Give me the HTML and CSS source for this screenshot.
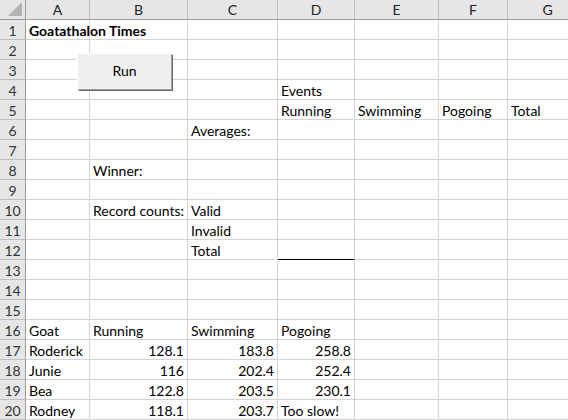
FILE: index.html
```html
<!DOCTYPE html>
<html>
<head>
	<meta charset="utf-8" />
	<title>Goatathalon Times</title>
	<link rel="stylesheet" href="styles.css">
</head>
<body>
	<div class="sheet">
		<div class="grid">
			<div class="corner"><span class="tri"></span></div>
			<div class="colhead">A</div><div class="colhead">B</div><div class="colhead">C</div><div class="colhead">D</div><div class="colhead">E</div><div class="colhead">F</div><div class="colhead">G</div>

			<div class="rowhead">1</div><div class="cell bold">Goatathalon Times</div><div class="cell"></div><div class="cell"></div><div class="cell"></div><div class="cell"></div><div class="cell"></div><div class="cell"></div>
			<div class="rowhead">2</div><div class="cell"></div><div class="cell"></div><div class="cell"></div><div class="cell"></div><div class="cell"></div><div class="cell"></div><div class="cell"></div>
			<div class="rowhead">3</div><div class="cell"></div><div class="cell"></div><div class="cell"></div><div class="cell"></div><div class="cell"></div><div class="cell"></div><div class="cell"></div>
			<div class="rowhead">4</div><div class="cell"></div><div class="cell"></div><div class="cell"></div><div class="cell">Events</div><div class="cell"></div><div class="cell"></div><div class="cell"></div>
			<div class="rowhead">5</div><div class="cell"></div><div class="cell"></div><div class="cell"></div><div class="cell">Running</div><div class="cell">Swimming</div><div class="cell">Pogoing</div><div class="cell">Total</div>
			<div class="rowhead">6</div><div class="cell"></div><div class="cell"></div><div class="cell">Averages:</div><div class="cell"></div><div class="cell"></div><div class="cell"></div><div class="cell"></div>
			<div class="rowhead">7</div><div class="cell"></div><div class="cell"></div><div class="cell"></div><div class="cell"></div><div class="cell"></div><div class="cell"></div><div class="cell"></div>
			<div class="rowhead">8</div><div class="cell"></div><div class="cell">Winner:</div><div class="cell"></div><div class="cell"></div><div class="cell"></div><div class="cell"></div><div class="cell"></div>
			<div class="rowhead">9</div><div class="cell"></div><div class="cell"></div><div class="cell"></div><div class="cell"></div><div class="cell"></div><div class="cell"></div><div class="cell"></div>
			<div class="rowhead">10</div><div class="cell"></div><div class="cell">Record counts:</div><div class="cell">Valid</div><div class="cell"></div><div class="cell"></div><div class="cell"></div><div class="cell"></div>
			<div class="rowhead">11</div><div class="cell"></div><div class="cell"></div><div class="cell">Invalid</div><div class="cell"></div><div class="cell"></div><div class="cell"></div><div class="cell"></div>
			<div class="rowhead">12</div><div class="cell"></div><div class="cell"></div><div class="cell">Total</div><div class="cell underline"></div><div class="cell"></div><div class="cell"></div><div class="cell"></div>
			<div class="rowhead">13</div><div class="cell"></div><div class="cell"></div><div class="cell"></div><div class="cell"></div><div class="cell"></div><div class="cell"></div><div class="cell"></div>
			<div class="rowhead">14</div><div class="cell"></div><div class="cell"></div><div class="cell"></div><div class="cell"></div><div class="cell"></div><div class="cell"></div><div class="cell"></div>
			<div class="rowhead">15</div><div class="cell"></div><div class="cell"></div><div class="cell"></div><div class="cell"></div><div class="cell"></div><div class="cell"></div><div class="cell"></div>
			<div class="rowhead">16</div><div class="cell">Goat</div><div class="cell">Running</div><div class="cell">Swimming</div><div class="cell">Pogoing</div><div class="cell"></div><div class="cell"></div><div class="cell"></div>
			<div class="rowhead">17</div><div class="cell">Roderick</div><div class="cell num">128.1</div><div class="cell num">183.8</div><div class="cell num">258.8</div><div class="cell"></div><div class="cell"></div><div class="cell"></div>
			<div class="rowhead">18</div><div class="cell">Junie</div><div class="cell num">116</div><div class="cell num">202.4</div><div class="cell num">252.4</div><div class="cell"></div><div class="cell"></div><div class="cell"></div>
			<div class="rowhead">19</div><div class="cell">Bea</div><div class="cell num">122.8</div><div class="cell num">203.5</div><div class="cell num">230.1</div><div class="cell"></div><div class="cell"></div><div class="cell"></div>
			<div class="rowhead">20</div><div class="cell">Rodney</div><div class="cell num">118.1</div><div class="cell num">203.7</div><div class="cell">Too slow!</div><div class="cell"></div><div class="cell"></div><div class="cell"></div>
		</div>
		<button class="runBtn" type="button">Run</button>
	</div>
</body>
</html>
```
FILE: styles.css
```css
html, body{
	margin: 0;
	padding: 0;
	background: #fff;
	overflow: hidden;
}
.sheet{
	position: relative;
	width: 568px;
	height: 420px;
	overflow: hidden;
	font-family: Lato, "Open Sans", sans-serif;
	font-size: 14px;
	color: #000;
}
.grid{
	display: grid;
	grid-template-columns: 26px 64px 98px 90px 77px 84px 69px 80px;
	grid-auto-rows: 20px;
}
.grid > div{
	box-sizing: border-box;
	white-space: nowrap;
	overflow: visible;
}
.cell{
	border-right: 1px solid #d4d4d4;
	border-bottom: 1px solid #d4d4d4;
	padding: 0 3px;
	line-height: 20px;
	padding-top: 1px;
}
.bold{
	font-weight: bold;
}
.num{
	text-align: right;
}
.underline{
	border-bottom: 1px solid #000;
}
.corner{
	position: relative;
	background: #e6e6e6;
	border-right: 1px solid #9b9b9b;
	border-bottom: 1px solid #9b9b9b;
}
.tri{
	position: absolute;
	right: 3px;
	bottom: 3px;
	width: 0;
	height: 0;
	border-left: 14px solid transparent;
	border-bottom: 14px solid #b4b4b4;
}
.colhead{
	background: #e6e6e6;
	border-right: 1px solid #bdbdbd;
	border-bottom: 1px solid #9b9b9b;
	text-align: center;
	line-height: 19px;
	color: #222;
	font-size: 14px;
}
.rowhead{
	background: #e6e6e6;
	border-right: 1px solid #9b9b9b;
	border-bottom: 1px solid #bdbdbd;
	text-align: center;
	line-height: 20px;
	padding-top: 1px;
	color: #333;
}
.runBtn{
	position: absolute;
	left: 77px;
	top: 53px;
	width: 94px;
	height: 36px;
	box-sizing: border-box;
	background: #f0f0f0;
	border: none;
	border-top: 1px solid #fff;
	border-left: 1px solid #fff;
	box-shadow: 1px 1px 0 #a0a0a0, 2px 2px 0 #696969;
	font-family: Lato, "Open Sans", sans-serif;
	font-size: 14px;
	color: #000;
	padding: 0 0 3px 0;
}
```
